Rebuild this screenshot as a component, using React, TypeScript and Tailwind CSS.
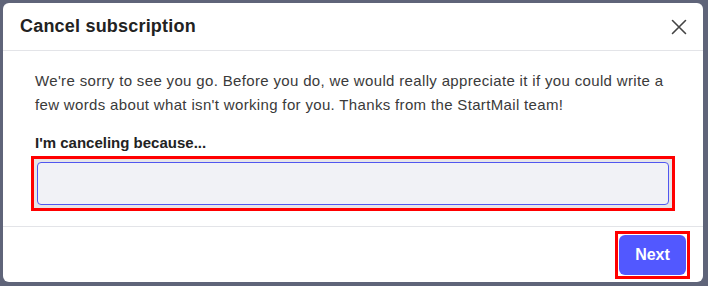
import React from "react";

export default function App() {
  return (
    <div className="w-[708px] h-[286px] bg-[#5f6479] pt-[3px] pl-[3px] pr-[5px] pb-[4px] flex" style={{ fontFamily: '"Liberation Sans", Arial, sans-serif' }}>
      <div className="flex-1 bg-white rounded-[6px] flex flex-col">
        <div className="h-[48px] flex items-center justify-between pl-[17px] pr-[14px] border-b border-[#e3e4e8]">
          <h2 className="text-[18px] font-bold text-[#222] tracking-[0.2px]">Cancel subscription</h2>
          <svg width="20" height="20" viewBox="0 0 20 20" fill="none" stroke="#444" strokeWidth="1.6" strokeLinecap="round">
            <path d="M3.5 3.5L16.5 16.5M16.5 3.5L3.5 16.5" />
          </svg>
        </div>
        <div className="flex-1 px-[32px] pt-[18px] border-b border-[#e3e4e8]">
          <p className="text-[15px] leading-[24px] tracking-[0.34px] text-[#3a3a3a]">
            We're sorry to see you go. Before you do, we would really appreciate it if you could write a few words about what isn't working for you. Thanks from the StartMail team!
          </p>
          <label className="block mt-[16px] text-[15px] font-bold text-[#222] leading-[20px]">I'm canceling because...</label>
          <div className="mt-[3px] -mx-[4px] border-[3px] border-[#ff0000] p-[3px] bg-[#e6e6e8]">
            <input className="block w-full h-[43px] bg-[#f1f2f6] border border-[#5157f0] rounded-[4px] outline-none" />
          </div>
        </div>
        <div className="h-[55px] flex items-center justify-end pr-[13px]">
          <div className="border-[3px] border-[#ff0000] p-[1px]">
            <button className="w-[67px] h-[40px] rounded-[6px] bg-[#5258ff] text-white font-bold text-[16px]">Next</button>
          </div>
        </div>
      </div>
    </div>
  );
}
